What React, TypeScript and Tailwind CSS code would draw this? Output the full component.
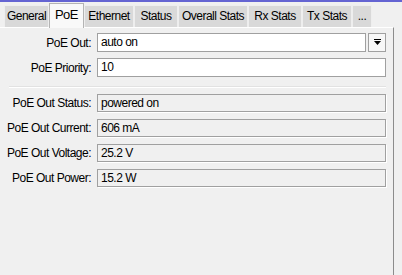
const tabs = [
  { name: "General", w: "w-[45px]" },
  { name: "PoE", w: "w-[35px]" },
  { name: "Ethernet", w: "w-[50px]" },
  { name: "Status", w: "w-[44px]" },
  { name: "Overall Stats", w: "w-[70px]" },
  { name: "Rx Stats", w: "w-[54px]" },
  { name: "Tx Stats", w: "w-[50px]" },
  { name: "...", w: "w-[20px]" },
];

const statusRows = [
  { label: "PoE Out Status:", value: "powered on" },
  { label: "PoE Out Current:", value: "606 mA" },
  { label: "PoE Out Voltage:", value: "25.2 V" },
  { label: "PoE Out Power:", value: "15.2 W" },
];

const Label = ({ text }: { text: string }) => (
  <div className="w-[92px] shrink-0 text-right pr-[1px] leading-[18px] whitespace-nowrap">{text}</div>
);

const DropArrow = () => (
  <svg width="9" height="8" viewBox="0 0 9 8">
    <rect x="1" y="0" width="7" height="1" fill="#000" />
    <path d="M1 2 H8 L4.5 6 Z" fill="#000" />
  </svg>
);

export default function App() {
  return (
    <div
      className="w-[402px] h-[275px] bg-[#f0f0f0] overflow-hidden text-[12px] tracking-[-0.5px] text-black"
      style={{ fontFamily: '"Liberation Sans", Arial, sans-serif' }}
    >
      <div className="h-[2px] bg-[#6464d2]" />
      <div className="flex items-end h-[25px] pl-[4px]">
        {tabs.map((t) =>
          t.name === "PoE" ? (
            <div
              key={t.name}
              className={`${t.w} h-[25px] bg-[#f9f9f9] border border-b-0 border-[#b4b4b4] leading-[22px] text-center relative z-10 -mb-[1px] text-[13px]`}
            >
              {t.name}
            </div>
          ) : (
            <div
              key={t.name}
              className={`${t.w} h-[22px] bg-[#d9d9d9] border border-b-0 border-[#eeeeee] leading-[20px] text-center whitespace-nowrap`}
            >
              {t.name}
            </div>
          )
        )}
      </div>
      <div className="w-[394px] h-[248px] border-t border-white border-r border-r-[#8c8c8c] pt-[5px] flex flex-col">
        <div className="flex items-center h-[19px]">
          <Label text="PoE Out:" />
          <div className="ml-[5px] w-[269px] h-[19px] bg-white border border-[#a0a0a0] pl-[3px] leading-[17px]">auto on</div>
          <div className="ml-[2px] w-[18px] h-[19px] bg-[#f7f7f7] border border-[#a0a0a0] flex items-center justify-center">
            <DropArrow />
          </div>
        </div>
        <div className="flex items-center h-[19px] mt-[6px]">
          <Label text="PoE Priority:" />
          <div className="ml-[5px] w-[289px] h-[19px] bg-white border border-[#a0a0a0] pl-[3px] leading-[17px]">10</div>
        </div>
        <div className="ml-[9px] w-[377px] h-[2px] mt-[9px] bg-[#e2e2e2] border-b border-white" />
        <div className="flex flex-col gap-[7px] mt-[6px]">
          {statusRows.map((r) => (
            <div key={r.label} className="flex items-center h-[18px]">
              <Label text={r.label} />
              <div className="ml-[5px] w-[289px] h-[18px] bg-[#f0f0f0] border border-[#a0a0a0] shadow-[1px_1px_0_#ffffff] pl-[3px] leading-[16px]">
                {r.value}
              </div>
            </div>
          ))}
        </div>
      </div>
    </div>
  );
}
